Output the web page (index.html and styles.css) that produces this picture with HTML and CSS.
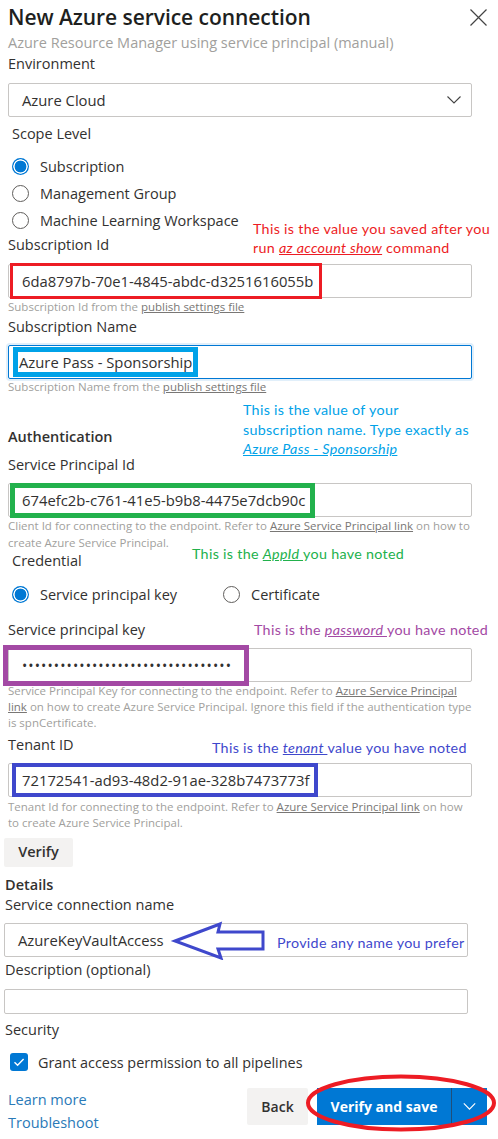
FILE: index.html
```html
<!DOCTYPE html>
<html lang="en">
<head>
<meta charset="utf-8">
<title>New Azure service connection</title>
<link rel="stylesheet" href="styles.css">
</head>
<body>
<div class="panel">
  <div class="top">
    <div class="header">
      <h1 class="title">New Azure service connection</h1>
      <svg class="close" viewBox="0 0 17 17"><path d="M0.5 0.5L16.5 16.5M16.5 0.5L0.5 16.5" stroke="#444" stroke-width="1.2" fill="none"/></svg>
    </div>
    <div class="subtitle">Azure Resource Manager using service principal (manual)</div>
    <div class="label mt1">Environment</div>
    <div class="field select mt9">
      <span class="val">Azure Cloud</span>
      <svg class="chev" viewBox="0 0 14 8"><path d="M0.5 0.5L7 7L13.5 0.5" stroke="#444" stroke-width="1.1" fill="none"/></svg>
    </div>
    <div class="label ind mt7">Scope Level</div>
    <div class="radios mt8">
      <div class="radio r28"><span class="dot on"></span>Subscription</div>
      <div class="radio r27"><span class="dot"></span>Management Group</div>
      <div class="radio r27"><span class="dot"></span>Machine Learning Workspace</div>
    </div>

    <div class="label mt1">Subscription Id</div>
    <div class="field mt9">
      <span class="hl hl-red">6da8797b-70e1-4845-abdc-d3251616055b</span>
    </div>
    <div class="help mt1">Subscription Id from the <u>publish settings file</u></div>

    <div class="label mt2">Subscription Name</div>
    <div class="field focus mt8">
      <span class="hl hl-cyan">Azure Pass - Sponsorship</span>
    </div>
    <div class="help">Subscription Name from the <u>publish settings file</u></div>

    <div class="label strong mt32">Authentication</div>
    <div class="label mt8">Service Principal Id</div>
    <div class="field mt8">
      <span class="hl hl-green">674efc2b-c761-41e5-b9b8-4475e7dcb90c</span>
    </div>
    <div class="help lh17">Client Id for connecting to the endpoint. Refer to <u>Azure Service Principal link</u> on how to create Azure Service Principal.</div>

    <div class="label ind">Credential</div>
    <div class="cred mt9">
      <div class="radio r28 w211"><span class="dot on"></span>Service principal key</div>
      <div class="radio r28"><span class="dot"></span>Certificate</div>
    </div>

    <div class="label mt12">Service principal key</div>
    <div class="field mt8">
      <span class="hl hl-purple"><span class="dots">•••••••••••••••••••••••••••••••••</span></span>
    </div>
    <div class="help mt1">Service Principal Key for connecting to the endpoint. Refer to <u>Azure Service Principal link</u> on how to create Azure Service Principal. Ignore this field if the authentication type is spnCertificate.</div>

    <div class="label mt4">Tenant ID</div>
    <div class="field mt8">
      <span class="hl hl-blue">72172541-ad93-48d2-91ae-328b7473773f</span>
    </div>
    <div class="help mt2">Tenant Id for connecting to the endpoint. Refer to <u>Azure Service Principal link</u> on how to create Azure Service Principal.</div>
  </div>

  <div class="btn-row mt7">
    <button class="btn verify">Verify</button>
  </div>

  <div class="details">
    <div class="label strong mt8">Details</div>
    <div class="label">Service connection name</div>
    <div class="field mt8">
      <span class="val v2">AzureKeyVaultAccess</span>
    </div>
    <div class="label mt3">Description (optional)</div>
    <div class="field short mt9"></div>
    <div class="label mt6">Security</div>
    <div class="check mt10"><span class="box"><svg viewBox="0 0 18 18"><path d="M4.5 9.2L7.6 12.2L13.6 6" stroke="#fff" stroke-width="1.4" fill="none"/></svg></span>Grant access permission to all pipelines</div>
  </div>

  <div class="footer">
    <div class="links">
      <a class="link">Learn more</a>
      <a class="link">Troubleshoot</a>
    </div>
    <div class="actions">
      <button class="btn back">Back</button>
      <div class="split">
        <button class="primary">Verify and save</button>
        <button class="primary more"><svg viewBox="0 0 14 8"><path d="M0.5 0.5L7 7L13.5 0.5" stroke="#fff" stroke-width="1.3" fill="none"/></svg></button>
      </div>
    </div>
  </div>

  <div class="note note-red">This is the value you saved after you<br>run <u><i>az account show</i></u> command</div>
  <div class="note note-cyan">This is the value of your<br>subscription name. Type exactly as<br><u><i>Azure Pass - Sponsorship</i></u></div>
  <div class="note note-green">This is the <u><i>AppId </i></u>you have noted</div>
  <div class="note note-purple">This is the <u><i>password </i></u>you have noted</div>
  <div class="note note-blue">This is the <u><i>tenant </i></u>value you have noted</div>
  <div class="note note-name">Provide any name you prefer</div>

  <svg class="arrow" viewBox="0 0 100 40" width="100" height="40">
    <polygon points="5,21 50,4 48,12 93,12 93,29 48,29 51,38" fill="none" stroke="#3f48cc" stroke-width="3" stroke-linejoin="miter"/>
  </svg>
  <svg class="ellipse" viewBox="0 0 196 62" width="196" height="62">
    <ellipse cx="96" cy="30" rx="93" ry="26.5" fill="none" stroke="#ed1c24" stroke-width="4"/>
  </svg>
</div>
</body>
</html>
```
FILE: styles.css
```css
* { box-sizing: border-box; }
html, body { margin: 0; padding: 0; background: #fff; }
body {
  font-family: "Open Sans", "Noto Sans", sans-serif;
  font-size: 14.5px;
  color: #323130;
}
.panel {
  position: relative;
  width: 498px;
  height: 1139px;
  overflow: hidden;
  padding-right: 11px;
}
.top { padding: 0 15px 0 8px; }
.header {
  display: flex;
  justify-content: space-between;
  align-items: flex-start;
  margin-right: -15px;
  padding-top: 4px;
}
.title {
  margin: 0;
  font-size: 21px;
  font-weight: 600;
  line-height: 26px;
  color: #201f1e;
  letter-spacing: -0.05px;
}
.close { width: 17px; height: 17px; margin-top: 5px; }
.subtitle {
  margin-top: 3px;
  line-height: 20px;
  color: #a19f9d;
  font-size: 14.5px;
}
.label { line-height: 20px; font-size: 14.5px; color: #323130; }
.label.ind { padding-left: 4px; }
.label.strong { font-weight: 600; }

.mt1 { margin-top: 1px; }
.mt2 { margin-top: 2px; }
.mt3 { margin-top: 3px; }
.mt4 { margin-top: 4px; }
.mt6 { margin-top: 6px; }
.mt7 { margin-top: 7px; }
.mt8 { margin-top: 8px; }
.mt9 { margin-top: 9px; }
.mt10 { margin-top: 10px; }
.mt12 { margin-top: 12px; }
.mt32 { margin-top: 32px; }

.field {
  height: 34px;
  border: 1px solid #c8c6c4;
  border-radius: 2px;
  display: flex;
  align-items: center;
  font-size: 14.8px;
  color: #323130;
}
.field.focus {
  border-color: #0078d4;
  box-shadow: 0 0 0 2px #e1effa;
}
.field.short { height: 25px; }
.val { padding-left: 13px; white-space: nowrap; }
.val.v2 { padding-left: 13px; }
.select { justify-content: space-between; }
.chev { width: 14px; height: 8px; margin-right: 10px; }

.radios { display: flex; flex-direction: column; }
.radio {
  display: flex;
  align-items: center;
  padding-left: 4px;
  font-size: 14.5px;
}
.r28 { height: 28px; }
.r27 { height: 27px; }
.dot {
  width: 17px;
  height: 17px;
  border-radius: 50%;
  border: 1px solid #605e5c;
  margin-right: 11px;
  flex: none;
}
.dot.on {
  border: none;
  background: radial-gradient(circle, #0078d4 0 5.6px, #fff 6.2px 6.9px, #0078d4 7.4px);
}
.cred { display: flex; }
.w211 { width: 211px; }

.hl {
  display: flex;
  align-items: center;
  flex: none;
  white-space: nowrap;
}
.hl-red {
  height: 36px;
  width: 312px;
  margin-left: 1px;
  border: 3px solid #ed1c24;
  padding-left: 9px;
}
.hl-cyan {
  height: 30px;
  width: 185px;
  margin-left: 4px;
  border: 5px solid #00a2e8;
  padding-left: 1px;
}
.hl-green {
  height: 35px;
  width: 305px;
  margin-left: 1px;
  border: 5px solid #22b14c;
  padding-left: 7px;
}
.hl-purple {
  height: 41px;
  width: 246px;
  margin-left: -6px;
  border: 5px solid #a349a4;
  padding-left: 14px;
}
.hl-blue {
  height: 34px;
  width: 306px;
  margin-left: 3px;
  border: 4px solid #3f48cc;
  padding-left: 6px;
}
.dots { letter-spacing: 1.1px; font-size: 14px; }

.help {
  font-size: 11.5px;
  line-height: 16px;
  color: #a19f9d;
}
.help.lh17 { line-height: 17px; }
.help u { color: #797775; }

.btn-row { padding-left: 4px; }
.btn {
  font-family: inherit;
  border: none;
  border-radius: 2px;
  background: #f3f2f1;
  color: #323130;
  font-weight: 600;
  font-size: 14.5px;
  padding: 0 0 3px;
}
.verify { width: 69px; height: 29px; }

.details { padding: 0 19px 0 4px; }
.details .label { padding-left: 1px; }
.check {
  display: flex;
  align-items: center;
  height: 24px;
  padding-left: 6px;
  font-size: 14.4px;
}
.box {
  width: 18px;
  height: 18px;
  border-radius: 3px;
  background: #0078d4;
  margin-right: 10px;
  display: flex;
}
.box svg { width: 18px; height: 18px; }

.footer {
  margin-top: 14px;
  display: flex;
  justify-content: space-between;
  align-items: flex-start;
  padding-left: 8px;
}
.links { display: flex; flex-direction: column; }
.link {
  line-height: 23px;
  font-size: 14.5px;
  color: #2a7ab8;
}
.actions { display: flex; gap: 9px; }
.back { width: 61px; height: 37px; font-weight: 600; font-size: 14px; padding: 0; }
.split { display: flex; }
.primary {
  font-family: inherit;
  border: none;
  background: #0078d4;
  color: #fff;
  font-weight: 700;
  font-size: 14px;
  height: 37px;
  width: 134px;
  padding: 0;
}
.primary.more {
  width: 36px;
  border-left: 1px solid #1f4f7a;
  display: flex;
  align-items: center;
  justify-content: center;
}
.primary.more svg { width: 13px; height: 7px; }

.note {
  position: absolute;
  font-family: "Lato", "DejaVu Sans", sans-serif;
  font-size: 14.3px;
  letter-spacing: 0.3px;
  line-height: 19px;
  white-space: nowrap;
}
.note-red { left: 253px; top: 219px; color: #ed1c24; }
.note-cyan { left: 243px; top: 400px; color: #00a2e8; line-height: 19.5px; }
.note-green { left: 192px; top: 544px; color: #22b14c; }
.note-purple { left: 254px; top: 620px; color: #a349a4; }
.note-blue { left: 212px; top: 738px; color: #3f48cc; }
.note-name { left: 277px; top: 933px; color: #3f48cc; }
.arrow { position: absolute; left: 170px; top: 920px; }
.ellipse { position: absolute; left: 305px; top: 1073px; }
```
